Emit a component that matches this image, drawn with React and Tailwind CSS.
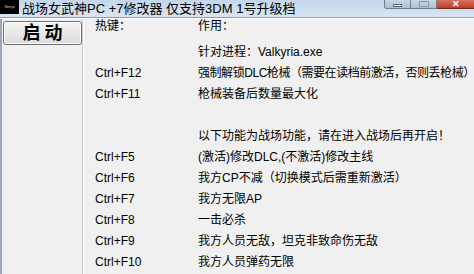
import React from 'react';

const FONT = { fontFamily: '"Liberation Sans", "Noto Sans CJK SC", sans-serif' };

const rows = [
    { key: 'Ctrl+F12', text: '强制解锁DLC枪械（需要在读档前激活，否则丢枪械）', tight: true },
    { key: 'Ctrl+F11', text: '枪械装备后数量最大化' },
    { key: '', text: '' },
    { key: '', text: '以下功能为战场功能，请在进入战场后再开启！' },
    { key: 'Ctrl+F5', text: '(激活)修改DLC,(不激活)修改主线' },
    { key: 'Ctrl+F6', text: '我方CP不减（切换模式后需重新激活）' },
    { key: 'Ctrl+F7', text: '我方无限AP' },
    { key: 'Ctrl+F8', text: '一击必杀' },
    { key: 'Ctrl+F9', text: '我方人员无敌，坦克非致命伤无敌' },
    { key: 'Ctrl+F10', text: '我方人员弹药无限' },
];

const TitleBar = () => (
    <div className="relative h-[18px] flex items-center bg-gradient-to-b from-[#c3d6ec] to-[#d9e5f3] border-b border-[#8b9cb0]">
        <div className="w-[19px] h-[14px] self-start bg-black flex items-center justify-center overflow-hidden">
            <span className="text-[4px] leading-none text-gray-300">Senjo</span>
        </div>
        <div className="ml-[3px] text-[13px] leading-none text-black whitespace-nowrap" style={FONT}>
            战场女武神PC +7修改器 仅支持3DM 1号升级档
        </div>
        <div className="absolute top-0 right-0 flex h-[9px]">
            <div className="w-[27px] h-full bg-gradient-to-b from-[#c9d7e6] to-[#aebfd3] border border-t-0 border-[#6b7f96] rounded-bl-[3px] flex items-center justify-center">
                <div className="w-[9px] h-[3px] bg-white border border-[#55687f] mt-[2px]" />
            </div>
            <div className="w-[26px] h-full bg-gradient-to-b from-[#c9d7e6] to-[#aebfd3] border border-t-0 border-l-0 border-[#6b7f96] flex items-center justify-center">
                <div className="w-[10px] h-[6px] border border-[#8a9aac]" />
            </div>
            <div className="w-[37px] h-full bg-gradient-to-b from-[#d6715c] to-[#c0392b] border-b border-[#7a2a20] flex items-center justify-center">
                <span className="text-[9px] leading-none font-bold text-white">✕</span>
            </div>
        </div>
    </div>
);

const App = () => {
    return (
        <div className="w-[474px] h-[274px] overflow-hidden bg-[#f0f0f0] flex flex-col" style={FONT}>
            <TitleBar />
            <div className="flex-1 flex border-t border-white">
                <div className="w-[2px] bg-[#9ba8b7]" />
                <div className="w-[81px] pt-[2px] pl-[1px] border-r border-[#c8c8c8]">
                    <button className="w-[79px] h-[24px] rounded-[3px] border border-[#707070] bg-gradient-to-b from-[#f4f4f4] to-[#dcdcdc] shadow-[inset_0_0_0_1px_#fcfcfc] flex items-center justify-center">
                        <span className="text-[18px] leading-none font-bold tracking-[4px] text-black pl-[4px]">启动</span>
                    </button>
                </div>
                <div className="flex-1 min-w-0 border-l border-white pl-[11px] text-[12px] text-black">
                    <div className="flex h-[14px] items-center">
                        <div className="w-[103px]">热键：</div>
                        <div>作用：</div>
                    </div>
                    <div className="flex h-[21px] items-center mt-[8px]">
                        <div className="w-[103px]" />
                        <div>针对进程：Valkyria.exe</div>
                    </div>
                    {rows.map((r, i) => (
                        <div key={i} className="flex h-[21px] items-center whitespace-nowrap">
                            <div className="w-[103px] shrink-0">{r.key}</div>
                            <div className={r.tight ? 'tracking-[-0.45px]' : ''}>{r.text}</div>
                        </div>
                    ))}
                </div>
            </div>
        </div>
    );
};

export default App;
